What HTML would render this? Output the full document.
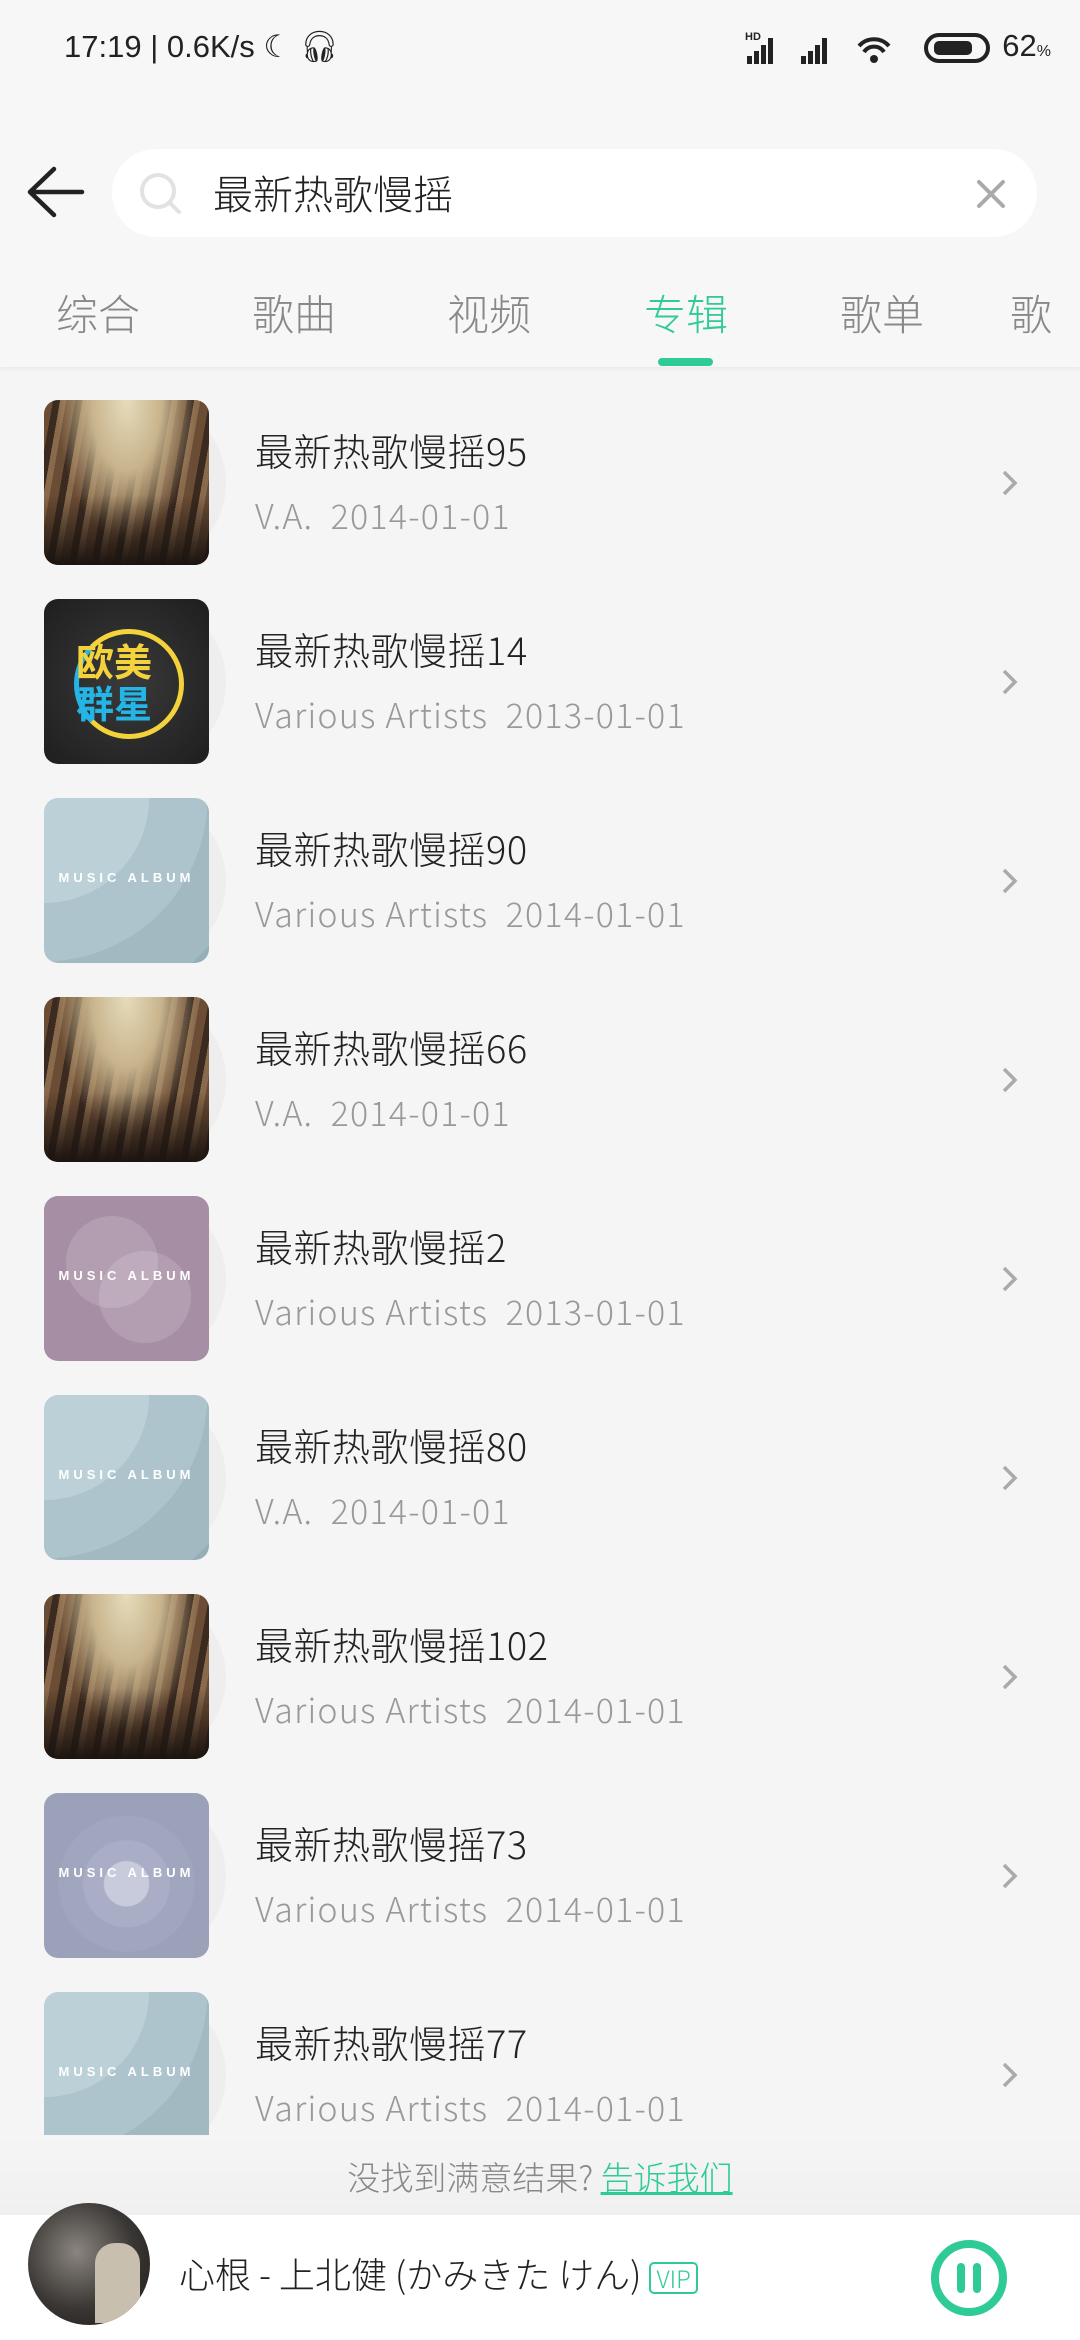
<!DOCTYPE html>
<html><head><meta charset="utf-8"><style>
*{margin:0;padding:0;box-sizing:border-box}
body{width:1080px;height:2340px;overflow:hidden;background:#f5f5f5;font-family:"Liberation Sans","Noto Sans CJK SC",sans-serif;position:relative}
.hdr{position:absolute;left:0;top:0;width:1080px;height:367px;background:#f7f7f7;box-shadow:0 2px 4px rgba(0,0,0,0.05);z-index:2}
.abs{position:absolute}
.sb{top:28px;font-size:31px;color:#222;white-space:nowrap}
.search{left:112px;top:149px;width:925px;height:88px;border-radius:44px;background:#fff}
.tab{top:282px;font-size:42px;color:#888;width:140px;text-align:center;font-family:"Noto Sans CJK SC",sans-serif;font-weight:300}
.row{position:absolute;left:0;width:1080px;height:199px}
.cov{position:absolute;left:44px;top:0;width:165px;height:165px;border-radius:14px;overflow:hidden}
.disc{position:absolute;left:90px;top:6px;width:136px;height:154px;border-radius:50%;background:#eeeeee}
.t{position:absolute;left:255px;top:22px;font-size:38px;color:#222;font-family:"Noto Sans CJK SC",sans-serif;font-weight:300;white-space:nowrap;letter-spacing:0.5px}
.s{position:absolute;left:255px;top:90px;font-size:34px;color:#999;font-family:"Noto Sans CJK SC",sans-serif;font-weight:300;white-space:nowrap;letter-spacing:1.2px}
.chev{position:absolute;left:1000px;top:68px}
.ma{position:absolute;left:0;width:100%;top:72px;text-align:center;color:#fff;font-size:13px;font-weight:bold;letter-spacing:4px}
.crowd{background:radial-gradient(ellipse at 50% 0%,#e6dcbc 0%,#c8b48c 30%,rgba(120,90,60,0) 60%),repeating-linear-gradient(100deg,#6b4c34 0 9px,#3a2a20 9px 16px,#8a6a4c 16px 22px);}
.crowd::after{content:"";position:absolute;left:0;right:0;bottom:0;height:70px;background:linear-gradient(rgba(30,20,15,0),#1c1410)}
.blue{background:radial-gradient(circle at 0% 0%,#bcd0d8 0 45%,#aec4cc 45% 70%,#a2b9c2 70% 95%,#95aeb8 95%)}
</style></head><body>
<div class="hdr">
 <div class="abs sb" style="left:64px">17:19 | 0.6K/s ☾ 🎧︎</div>
 <div class="abs sb" style="left:745px">
  <svg width="170" height="36" viewBox="0 0 170 36" style="vertical-align:middle">
   <g fill="#222"><text x="0" y="10" font-size="11" font-weight="bold">HD</text>
   <rect x="2" y="26" width="5" height="8"/><rect x="9" y="21" width="5" height="13"/><rect x="16" y="15" width="5" height="19"/><rect x="23" y="8" width="5" height="26"/>
   <rect x="56" y="26" width="5" height="8"/><rect x="63" y="21" width="5" height="13"/><rect x="70" y="15" width="5" height="19"/><rect x="77" y="8" width="5" height="26"/></g>
   <g fill="none" stroke="#222" stroke-width="4"><path d="M114 16a20 20 0 0 1 30 0"/><path d="M119 22a12 12 0 0 1 20 0"/></g><circle cx="129" cy="29" r="4" fill="#222"/>
  </svg>
  <svg width="70" height="34" viewBox="0 0 70 34" style="vertical-align:middle"><rect x="2" y="4" width="62" height="26" rx="13" fill="none" stroke="#222" stroke-width="4"/><rect x="10" y="10" width="38" height="14" rx="5" fill="#222"/></svg>
  <span>62<span style="font-size:16px">%</span></span>
 </div>
 <svg class="abs" style="left:26px;top:166px" width="60" height="52" viewBox="0 0 60 52"><path d="M28 3L4 26l24 23M4 26h52" fill="none" stroke="#222" stroke-width="4.5" stroke-linecap="round" stroke-linejoin="round"/></svg>
 <div class="abs search">
  <svg class="abs" style="left:26px;top:22px" width="46" height="46" viewBox="0 0 46 46"><circle cx="20" cy="20" r="16" fill="none" stroke="#e2e2e2" stroke-width="4"/><path d="M32 32l9 9" stroke="#e2e2e2" stroke-width="4" stroke-linecap="round"/></svg>
  <div class="abs" style="left:101px;top:14px;font-size:40px;color:#222;font-family:'Noto Sans CJK SC',sans-serif;font-weight:300">最新热歌慢摇</div>
  <svg class="abs" style="left:864px;top:30px" width="30" height="30" viewBox="0 0 30 30"><path d="M3 3l24 24M27 3L3 27" stroke="#aaa" stroke-width="4" stroke-linecap="round"/></svg>
 </div>
 <div class="abs tab" style="left:28px">综合</div>
 <div class="abs tab" style="left:224px">歌曲</div>
 <div class="abs tab" style="left:419px">视频</div>
 <div class="abs tab" style="left:616px;color:#2ecb96">专辑</div>
 <div class="abs tab" style="left:812px">歌单</div>
 <div class="abs tab" style="left:1010px;text-align:left;width:80px">歌</div>
 <div class="abs" style="left:658px;top:358px;width:55px;height:8px;border-radius:4px;background:#2ecb96"></div>
</div>

<div class="row" style="top:400px"><div class="disc"></div><div class="cov crowd"></div><div class="t">最新热歌慢摇95</div><div class="s">V.A.&nbsp;&nbsp;2014-01-01</div><svg class="chev" width="20" height="30" viewBox="0 0 20 30"><path d="M4 4l11 11L4 26" fill="none" stroke="#aaa" stroke-width="3.5"/></svg></div>
<div class="row" style="top:599px"><div class="disc"></div><div class="cov" style="background:radial-gradient(circle,#3a3a3a,#1e1e1e)"><div style="position:absolute;left:30px;top:30px;width:110px;height:110px;border:5px solid #f3d23b;border-radius:50%;border-left-color:#25b4e6"></div><div style="position:absolute;left:32px;top:40px;font-size:38px;line-height:42px;font-weight:bold;color:#f3d23b;font-family:'Noto Sans CJK SC',sans-serif">欧美<br><span style="color:#25b4e6">群星</span></div></div><div class="t">最新热歌慢摇14</div><div class="s">Various Artists&nbsp;&nbsp;2013-01-01</div><svg class="chev" width="20" height="30" viewBox="0 0 20 30"><path d="M4 4l11 11L4 26" fill="none" stroke="#aaa" stroke-width="3.5"/></svg></div>
<div class="row" style="top:798px"><div class="disc"></div><div class="cov blue"><div class="ma">MUSIC ALBUM</div></div><div class="t">最新热歌慢摇90</div><div class="s">Various Artists&nbsp;&nbsp;2014-01-01</div><svg class="chev" width="20" height="30" viewBox="0 0 20 30"><path d="M4 4l11 11L4 26" fill="none" stroke="#aaa" stroke-width="3.5"/></svg></div>
<div class="row" style="top:997px"><div class="disc"></div><div class="cov crowd"></div><div class="t">最新热歌慢摇66</div><div class="s">V.A.&nbsp;&nbsp;2014-01-01</div><svg class="chev" width="20" height="30" viewBox="0 0 20 30"><path d="M4 4l11 11L4 26" fill="none" stroke="#aaa" stroke-width="3.5"/></svg></div>
<div class="row" style="top:1196px"><div class="disc"></div><div class="cov" style="background:#a68ea4"><div style="position:absolute;left:22px;top:20px;width:92px;height:92px;border-radius:50%;background:rgba(255,255,255,0.15)"></div><div style="position:absolute;left:55px;top:55px;width:92px;height:92px;border-radius:50%;background:rgba(255,255,255,0.15)"></div><div class="ma">MUSIC ALBUM</div></div><div class="t">最新热歌慢摇2</div><div class="s">Various Artists&nbsp;&nbsp;2013-01-01</div><svg class="chev" width="20" height="30" viewBox="0 0 20 30"><path d="M4 4l11 11L4 26" fill="none" stroke="#aaa" stroke-width="3.5"/></svg></div>
<div class="row" style="top:1395px"><div class="disc"></div><div class="cov blue"><div class="ma">MUSIC ALBUM</div></div><div class="t">最新热歌慢摇80</div><div class="s">V.A.&nbsp;&nbsp;2014-01-01</div><svg class="chev" width="20" height="30" viewBox="0 0 20 30"><path d="M4 4l11 11L4 26" fill="none" stroke="#aaa" stroke-width="3.5"/></svg></div>
<div class="row" style="top:1594px"><div class="disc"></div><div class="cov crowd"></div><div class="t">最新热歌慢摇102</div><div class="s">Various Artists&nbsp;&nbsp;2014-01-01</div><svg class="chev" width="20" height="30" viewBox="0 0 20 30"><path d="M4 4l11 11L4 26" fill="none" stroke="#aaa" stroke-width="3.5"/></svg></div>
<div class="row" style="top:1793px"><div class="disc"></div><div class="cov" style="background:radial-gradient(circle at 50% 55%,#c7cbdc 0 18%,#a9aec6 19% 35%,#a0a6bd 36% 55%,#9aa1b8 56%)"><div class="ma">MUSIC ALBUM</div></div><div class="t">最新热歌慢摇73</div><div class="s">Various Artists&nbsp;&nbsp;2014-01-01</div><svg class="chev" width="20" height="30" viewBox="0 0 20 30"><path d="M4 4l11 11L4 26" fill="none" stroke="#aaa" stroke-width="3.5"/></svg></div>
<div class="row" style="top:1992px;height:143px;overflow:hidden"><div class="disc"></div><div class="cov blue"><div class="ma">MUSIC ALBUM</div></div><div class="t">最新热歌慢摇77</div><div class="s">Various Artists&nbsp;&nbsp;2014-01-01</div><svg class="chev" width="20" height="30" viewBox="0 0 20 30"><path d="M4 4l11 11L4 26" fill="none" stroke="#aaa" stroke-width="3.5"/></svg></div>

<div class="abs" style="left:0;top:2135px;width:1080px;height:80px;background:linear-gradient(#f5f5f5,#f0f0f0)"></div>
<div class="abs" style="left:0;top:2152px;width:1080px;text-align:center;font-size:33px;color:#888;font-family:'Noto Sans CJK SC',sans-serif;font-weight:300">没找到满意结果? <span style="color:#2ecb96;text-decoration:underline">告诉我们</span></div>

<div class="abs" style="left:0;top:2215px;width:1080px;height:125px;background:#fff">
 <div class="abs" style="left:28px;top:-12px;width:122px;height:122px;border-radius:50%;background:radial-gradient(circle at 40% 40%,#8a8580,#3a3633 55%,#1a1818);overflow:hidden"><div style="position:absolute;right:10px;top:40px;width:45px;height:80px;background:#c9bfae;border-radius:20px 20px 0 0"></div></div>
 <div class="abs" style="left:179px;top:32px;font-size:36px;color:#222;font-family:'Noto Sans CJK SC',sans-serif;font-weight:300;white-space:nowrap">心根 - 上北健 (かみきた けん) <span style="display:inline-block;border:2px solid #2ecb96;color:#2ecb96;font-size:24px;line-height:28px;padding:0 5px;border-radius:5px;vertical-align:middle">VIP</span></div>
 <svg class="abs" style="left:928px;top:22px" width="82" height="82" viewBox="0 0 82 82"><circle cx="41" cy="41" r="34" fill="none" stroke="#2ecb96" stroke-width="8"/><rect x="29" y="26" width="8" height="30" rx="4" fill="#2ecb96"/><rect x="45" y="26" width="8" height="30" rx="4" fill="#2ecb96"/></svg>
</div>
</body></html>
